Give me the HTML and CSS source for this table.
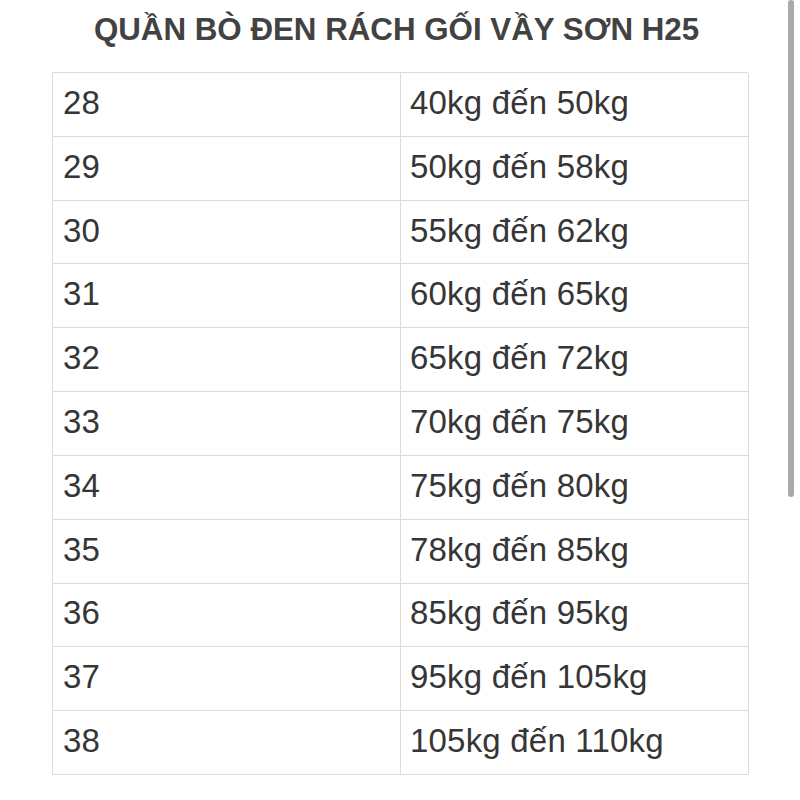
FILE: index.html
```html
<!DOCTYPE html>
<html lang="vi">
<head>
<meta charset="utf-8">
<title>Bảng size</title>
<link rel="stylesheet" href="styles.css">
</head>
<body>
<div class="page">
  <h1 class="title">QUẦN BÒ ĐEN RÁCH GỐI VẦY SƠN H25</h1>
  <div class="table">
    <div class="cell">28</div><div class="cell">40kg đến 50kg</div>
    <div class="cell">29</div><div class="cell">50kg đến 58kg</div>
    <div class="cell">30</div><div class="cell">55kg đến 62kg</div>
    <div class="cell">31</div><div class="cell">60kg đến 65kg</div>
    <div class="cell">32</div><div class="cell">65kg đến 72kg</div>
    <div class="cell">33</div><div class="cell">70kg đến 75kg</div>
    <div class="cell">34</div><div class="cell">75kg đến 80kg</div>
    <div class="cell">35</div><div class="cell">78kg đến 85kg</div>
    <div class="cell">36</div><div class="cell">85kg đến 95kg</div>
    <div class="cell">37</div><div class="cell">95kg đến 105kg</div>
    <div class="cell">38</div><div class="cell">105kg đến 110kg</div>
  </div>
</div>
<div class="scrollbar"></div>
</body>
</html>
```

FILE: styles.css
```css
html, body {
  margin: 0;
  padding: 0;
  background: #ffffff;
}
body {
  width: 800px;
  height: 800px;
  overflow: hidden;
  font-family: "Liberation Sans", Arial, sans-serif;
  position: relative;
}
.page {
  padding-top: 12px;
  display: flex;
  flex-direction: column;
  align-items: center;
}
.title {
  margin: 0;
  padding-right: 7px;
  font-size: 31.3px;
  line-height: 36px;
  font-weight: bold;
  color: #424242;
  text-align: center;
}
.table {
  margin-top: 24px;
  width: 696px;
  display: grid;
  grid-template-columns: 348px 348px;
  border-top: 1px solid #dcdcdc;
  border-left: 1px solid #dcdcdc;
  box-sizing: border-box;
}
.cell {
  height: 59.82px;
  border-right: 1px solid #dcdcdc;
  border-bottom: 1px solid #dcdcdc;
  padding: 0 0 3px 10px;
  box-sizing: content-box;
  display: flex;
  align-items: center;
  font-size: 33px;
  line-height: 38px;
  letter-spacing: 0.2px;
  color: #363636;
}
.cell:nth-child(2n) {
  padding-left: 9px;
}
.scrollbar {
  position: absolute;
  left: 788px;
  top: 0;
  width: 6px;
  height: 497px;
  border-radius: 3px;
  background: #a9a9a9;
}
```
